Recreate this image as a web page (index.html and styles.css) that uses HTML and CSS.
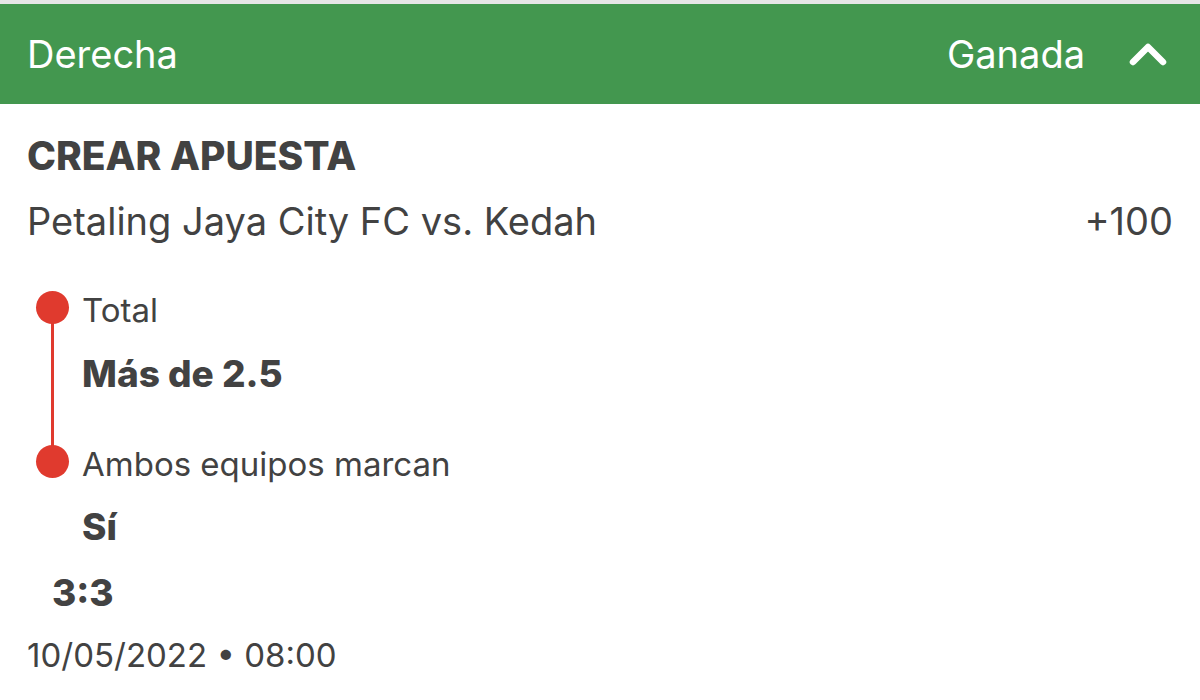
FILE: index.html
```html
<html><head><meta charset="UTF-8"><meta name="viewport" content="width=device-width, initial-scale=1.0"><title>Apuesta</title>
<link rel="stylesheet" href="styles.css">
</head>
<body>
<div class="topline"></div>
<div class="bet-header">
    <span class="side">Derecha</span>
    <div class="status">
        <span>Ganada</span>
        <svg class="chevron" width="40" height="26" viewBox="0 0 40 26">
            <path d="M5 21 L20 6 L35 21" fill="none" stroke="#fff" stroke-width="6.5" stroke-linecap="round" stroke-linejoin="round"/>
        </svg>
    </div>
</div>
<div class="bet-body">
    <div class="bet-type">CREAR APUESTA</div>
    <div class="match-row">
        <span>Petaling Jaya City FC vs. Kedah</span>
        <span>+100</span>
    </div>
    <div class="legs">
        <div class="leg">
            <span class="dot"></span>
            <div class="market">Total</div>
            <div class="pick">Más de 2.5</div>
        </div>
        <div class="leg last">
            <span class="dot"></span>
            <div class="market">Ambos equipos marcan</div>
            <div class="pick">Sí</div>
        </div>
    </div>
    <div class="score">3:3</div>
    <div class="date">10/05/2022 • 08:00</div>
</div>
</body></html>
```

FILE: styles.css
```css
body {
    margin: 0;
    font-family: 'Inter', 'Roboto', sans-serif;
    background-color: #ffffff;
    color: #424242;
    overflow: hidden;
}

.topline {
    height: 4px;
    background-color: #e6e6e6;
}

.bet-header {
    height: 100px;
    background-color: #43974f;
    color: #ffffff;
    display: flex;
    justify-content: space-between;
    align-items: center;
    padding: 0 32px 0 27px;
    font-size: 38px;
}

.status {
    display: flex;
    align-items: center;
    gap: 43px;
}

.chevron {
    display: block;
}

.bet-body {
    padding: 0 27px;
}

.bet-type {
    margin-top: 30px;
    font-size: 39px;
    font-weight: 800;
    line-height: 44px;
}

.match-row {
    display: flex;
    justify-content: space-between;
    font-size: 38px;
    line-height: 44px;
    margin-top: 21px;
}

.legs {
    margin-top: 47px;
}

/* timeline: dot per leg, line joins the dots */
.leg {
    position: relative;
    padding-left: 55px;
}

.leg::before {
    content: '';
    position: absolute;
    left: 24px;
    top: 17px;
    width: 3px;
    height: 154px;
    background-color: #e03a2e;
}

.leg.last::before {
    display: none;
}

.dot {
    position: absolute;
    left: 9px;
    top: 1px;
    width: 33px;
    height: 33px;
    border-radius: 50%;
    background-color: #e03a2e;
}

.market {
    font-size: 33px;
    line-height: 40px;
}

.pick {
    font-size: 37px;
    font-weight: 800;
    line-height: 44px;
    margin-top: 22px;
    padding-bottom: 48px;
}

.leg.last .pick {
    margin-top: 21px;
    padding-bottom: 0;
}

.score {
    margin-top: 22px;
    padding-left: 25px;
    font-size: 37px;
    font-weight: 800;
    line-height: 44px;
}

.date {
    margin-top: 20px;
    font-size: 33px;
    line-height: 40px;
}
```
